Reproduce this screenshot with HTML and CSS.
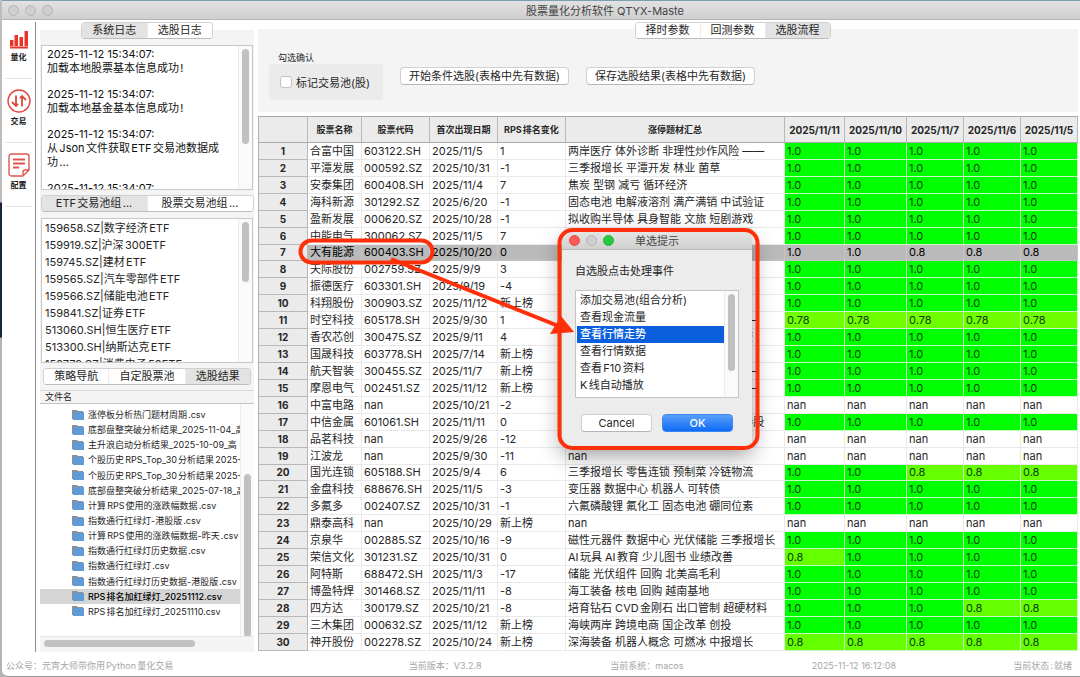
FILE: index.html
```html
<!DOCTYPE html>
<html lang="zh-CN">
<head>
    <meta charset="UTF-8">
    <meta name="viewport" content="width=device-width, initial-scale=1.0">
    <title>股票量化分析软件 QTYX-Maste</title>
    <link rel="stylesheet" href="styles.css">
</head>

<body>
    <div class="app">
        <header class="titlebar">
            <div class="lights"><i></i><i></i><i></i></div>
            <h1>股票量化分析软件 QTYX-Maste</h1>
        </header>

        <div class="main">
            <nav class="sidebar">
                <a href="#quant">
                    <svg width="20" height="18" viewBox="0 0 20 18" fill="#e8352b">
                        <rect x="1" y="9" width="3.500" height="6"/>
                        <rect x="5.500" y="4" width="3.500" height="11"/>
                        <rect x="10.500" y="6" width="3.500" height="9"/>
                        <rect x="15.500" y="0" width="3.500" height="15"/>
                        <rect x="1" y="15.500" width="18" height="2"/>
                    </svg>
                    量化
                </a>
                <a href="#trade">
                    <svg width="24" height="24" viewBox="0 0 24 24" fill="none" stroke="#e0483e" stroke-width="1.4">
                        <circle cx="12" cy="12" r="11"/>
                        <path d="M9 6.500V17M5 13L9 17L11 15M15 17.500V7M13 9L15 7L19 11" stroke-width="1.8"/>
                    </svg>
                    交易
                </a>
                <a href="#config">
                    <svg width="22" height="24" viewBox="0 0 22 24" fill="none" stroke="#e0564e" stroke-width="1.4">
                        <path d="M14 23H3.500Q1 23 1 20.500V3.500Q1 1 3.500 1H18.500Q21 1 21 3.500V17L15 23V19Q15 17 17 17H21"/>
                        <path d="M5 6.500H17M5 10.500H17M5 14.500H11" stroke-width="1.8"/>
                    </svg>
                    配置
                </a>
            </nav>

            <aside class="left">
                <div class="tabs tabs-log">
                    <button class="on">系统日志</button><button>选股日志</button>
                </div>
                <div class="box log">
                    <div class="text">
                        <p>2025-11-12 15:34:07:<br>加载本地股票基本信息成功!</p>
                        <p>2025-11-12 15:34:07:<br>加载本地基金基本信息成功!</p>
                        <p>2025-11-12 15:34:07:<br>从Json文件获取ETF交易池数据成功...</p>
                        <p>2025-11-12 15:34:07:</p>
                    </div>
                    <div class="track"><div class="thumb thumb-log"></div></div>
                </div>

                <div class="tabs tabs-pool">
                    <button class="on">ETF交易池组...</button><button>股票交易池组...</button>
                </div>
                <div class="box pool">
                    <ul>
                        <li>159658.SZ|数字经济ETF</li>
                        <li>159919.SZ|沪深300ETF</li>
                        <li>159745.SZ|建材ETF</li>
                        <li>159565.SZ|汽车零部件ETF</li>
                        <li>159566.SZ|储能电池ETF</li>
                        <li>159841.SZ|证券ETF</li>
                        <li>513060.SH|恒生医疗ETF</li>
                        <li>513300.SH|纳斯达克ETF</li>
                        <li>159779.SZ|消费电子50ETF</li>
                    </ul>
                    <div class="track"><div class="thumb thumb-pool"></div></div>
                </div>

                <div class="tabs tabs-nav">
                    <button>策略导航</button><button>自定股票池</button><button class="on">选股结果</button>
                </div>
                <div class="files-head">文件名</div>
                <div class="files">
                    <ul id="files"></ul>
                    <div class="track"><div class="thumb thumb-files"></div></div>
                </div>
                <div class="hscroll"><div></div></div>
            </aside>

            <section class="right">
                <div class="panel">
                    <div class="tabs tabs-flow">
                        <button>择时参数</button><button>回测参数</button><button class="on">选股流程</button>
                    </div>
                    <div class="tools">
                        <fieldset>
                            <legend>勾选确认</legend>
                            <div class="group">
                                <input type="checkbox" id="mark"><label for="mark">标记交易池(股)</label>
                            </div>
                        </fieldset>
                        <button class="push">开始条件选股(表格中先有数据)</button>
                        <button class="push">保存选股结果(表格中先有数据)</button>
                    </div>
                </div>
                <div class="sheet">
                    <table>
                        <colgroup>
                            <col class="c-no"><col class="c-name"><col class="c-code"><col class="c-date"><col class="c-rank"><col>
                            <col class="c-d1"><col class="c-d2"><col class="c-d3"><col class="c-d3"><col class="c-d3">
                        </colgroup>
                        <thead>
                            <tr>
                                <th></th><th>股票名称</th><th>股票代码</th><th>首次出现日期</th><th>RPS排名变化</th><th>涨停题材汇总</th>
                                <th class="num">2025/11/11</th><th class="num">2025/11/10</th><th class="num">2025/11/7</th><th class="num">2025/11/6</th><th class="num">2025/11/5</th>
                            </tr>
                        </thead>
                        <tbody id="rows"></tbody>
                    </table>
                </div>
            </section>
        </div>

        <footer class="status">
            <span>公众号：元宵大师带你用Python量化交易</span>
            <span>当前版本：V3.2.8</span>
            <span>当前系统：macos</span>
            <span>2025-11-12 16:12:08</span>
            <span>当前状态:就绪</span>
        </footer>
    </div>

    <div class="dialog" role="dialog" aria-labelledby="dialog-title">
        <div class="dialog-bar">
            <div class="lights"><i class="red"></i><i></i><i class="green"></i></div>
            <h2 id="dialog-title">单选提示</h2>
        </div>
        <div class="dialog-body">
            <p>自选股点击处理事件</p>
            <div class="choices">
                <ul role="listbox">
                    <li role="option">添加交易池(组合分析)</li>
                    <li role="option">查看现金流量</li>
                    <li role="option" aria-selected="true">查看行情走势</li>
                    <li role="option">查看行情数据</li>
                    <li role="option">查看F10资料</li>
                    <li role="option">K线自动播放</li>
                </ul>
                <div class="track"><div class="thumb thumb-choices"></div></div>
            </div>
            <div class="actions">
                <button>Cancel</button><button class="ok">OK</button>
            </div>
        </div>
    </div>

    <svg class="marks" width="1080" height="677" viewBox="0 0 1080 677" fill="none" stroke="#ff2f0a" stroke-width="4">
        <rect x="300.500" y="240.500" width="132" height="22" rx="11"/>
        <rect x="559.500" y="230" width="198" height="218" rx="13"/>
        <path d="M391 259L556 325"/>
        <path d="M574 332L561 316L550 334Z" fill="#ff2f0a" stroke="none"/>
    </svg>

    <script>
        const files = [
            '涨停板分析热门题材周期.csv',
            '底部盘整突破分析结果_2025-11-04_高',
            '主升浪启动分析结果_2025-10-09_高',
            '个股历史RPS_Top_30分析结果2025-11',
            '个股历史RPS_Top_30分析结果2025-10',
            '底部盘整突破分析结果_2025-07-18_高',
            '计算RPS使用的涨跌幅数据.csv',
            '指数通行红绿灯-港股版.csv',
            '计算RPS使用的涨跌幅数据-昨天.csv',
            '指数通行红绿灯历史数据.csv',
            '指数通行红绿灯.csv',
            '指数通行红绿灯历史数据-港股版.csv',
            'RPS排名加红绿灯_20251112.csv',
            'RPS排名加红绿灯_20251110.csv'
        ];
        const folder = '<svg width="12" height="10" viewBox="0 0 12 10"><path d="M0 0H5L6 1H11V9H0Z" fill="#8d8f94"/><path d="M1 2H12V10H1Z" fill="#5f9bd6"/></svg>';

        document.getElementById('files').innerHTML = files.map((name, i) =>
            `<li${i === 12 ? ' class="on"' : ''}>${folder}<span>${name}</span></li>`).join('');

        // 名称, 代码, 首次出现日期, 排名变化, 题材, 红绿灯
        const one = '1.0 1.0 1.0 1.0 1.0';
        const nan = 'nan nan nan nan nan';
        const rows = [
            ['合富中国', '603122.SH', '2025/11/5', '1', '两岸医疗 体外诊断 非理性炒作风险 ——', one],
            ['平潭发展', '000592.SZ', '2025/10/31', '-1', '三季报增长 平潭开发 林业 菌草', one],
            ['安泰集团', '600408.SH', '2025/11/4', '7', '焦炭 型钢 减亏 循环经济', one],
            ['海科新源', '301292.SZ', '2025/6/20', '-1', '固态电池 电解液溶剂 满产满销 中试验证', one],
            ['盈新发展', '000620.SZ', '2025/10/28', '-1', '拟收购半导体 具身智能 文旅 短剧游戏', one],
            ['中能电气', '300062.SZ', '2025/11/5', '7', '储能 充电桩 光伏', one],
            ['大有能源', '600403.SH', '2025/10/20', '0', '煤炭 河南国资', '1.0 1.0 0.8 0.8 0.8'],
            ['天际股份', '002759.SZ', '2025/9/9', '3', '六氟磷酸锂 固态电池', one],
            ['振德医疗', '603301.SH', '2025/9/19', '-4', '三季报增长 医疗器械 医疗耗材 新址', one],
            ['科翔股份', '300903.SZ', '2025/11/12', '新上榜', '印制电路板 固态电池', one],
            ['时空科技', '605178.SH', '2025/9/30', '1', '存储芯片 收购资产 夜间经济 股权 ——', '0.78 0.78 0.78 0.78 0.78'],
            ['香农芯创', '300475.SZ', '2025/9/11', '4', '存储芯片 三季报增长 海力士 国资投资', one],
            ['国晟科技', '603778.SH', '2025/7/14', '新上榜', '光伏 固态电池', one],
            ['航天智装', '300455.SZ', '2025/11/7', '新上榜', '商业航天 卫星导航 智能装备 央企 ——', one],
            ['摩恩电气', '002451.SZ', '2025/11/12', '新上榜', '电线电缆 核电风电 电网设备 上海 ——', one],
            ['中富电路', 'nan', '2025/10/21', '-2', 'nan', nan],
            ['中信金属', '601061.SH', '2025/11/11', '0', '三季报增长 有色金属 铌铜贸易 矿山参股', one],
            ['品茗科技', 'nan', '2025/9/26', '-12', 'nan', nan],
            ['江波龙', 'nan', '2025/9/30', '-11', 'nan', nan],
            ['国光连锁', '605188.SH', '2025/9/4', '6', '三季报增长 零售连锁 预制菜 冷链物流', '1.0 1.0 0.8 0.8 0.8'],
            ['金盘科技', '688676.SH', '2025/11/5', '-3', '变压器 数据中心 机器人 可转债', one],
            ['多氟多', '002407.SZ', '2025/10/31', '-1', '六氟磷酸锂 氟化工 固态电池 硼同位素', one],
            ['鼎泰高科', 'nan', '2025/10/29', '新上榜', 'nan', nan],
            ['京泉华', '002885.SZ', '2025/10/16', '-9', '磁性元器件 数据中心 光伏储能 三季报增长', one],
            ['荣信文化', '301231.SZ', '2025/10/31', '0', 'AI玩具 AI教育 少儿图书 业绩改善', '0.8 1.0 1.0 1.0 1.0'],
            ['阿特斯', '688472.SH', '2025/11/3', '-17', '储能 光伏组件 回购 北美高毛利', one],
            ['博盈特焊', '301468.SZ', '2025/11/11', '-8', '海工装备 核电 回购 越南基地', one],
            ['四方达', '300179.SZ', '2025/10/21', '-8', '培育钻石 CVD金刚石 出口管制 超硬材料', '1.0 1.0 1.0 0.8 0.8'],
            ['三木集团', '000632.SZ', '2025/11/12', '新上榜', '海峡两岸 跨境电商 国企改革 创投', one],
            ['神开股份', '002278.SZ', '2025/10/24', '新上榜', '深海装备 机器人概念 可燃冰 中报增长', '0.8 0.8 0.8 0.8 0.8']
        ];
        const light = { '1.0': 'g1', '0.8': 'g2', '0.78': 'g3' };

        document.getElementById('rows').innerHTML = rows.map((r, i) => {
            const text = r.slice(0, 5).map(v => `<td>${v}</td>`).join('');
            const vals = r[5].split(' ').map(v => `<td class="${light[v] || ''}">${v}</td>`).join('');
            return `<tr${i === 6 ? ' class="on"' : ''}><th class="num">${i + 1}</th>${text}${vals}</tr>`;
        }).join('');
    </script>
</body>
</html>
```

FILE: styles.css
```css
*{
    box-sizing: border-box;
    margin: 0;
    padding: 0;
}

body{
    font-family: Inter, "Noto Sans CJK SC", sans-serif;
    font-size: 11px;
    color: #262626;
    text-autospace: normal;
    background: linear-gradient(#bdbdbd 202px, #17243a 203px, #17243a 337px, #b4b4b4 338px);
}

ul{
    list-style: none;
}

button, input{
    font: inherit;
    color: inherit;
}

.app{
    height: 100vh;
    min-height: 600px;
    display: flex;
    flex-direction: column;
    margin-left: 2px;
    background-color: #fff;
    border-top: 1px solid #7d9fb4;
    border-bottom: 1px solid #999;
    border-radius: 0 0 0 6px;
    overflow: hidden;
}

/* title bar */
.titlebar{
    flex: none;
    height: 19px;
    position: relative;
    display: flex;
    align-items: center;
    justify-content: center;
    background: linear-gradient(#e2e2e2, #cfcfcf);
    border-bottom: 1px solid #b5b5b5;
}

.titlebar h1{
    font-size: 11px;
    font-weight: 400;
    color: #444;
    padding-left: 128px;
}

.lights{
    position: absolute;
    left: 6px;
    display: flex;
    gap: 6px;
}

.lights i{
    width: 11px;
    height: 11px;
    border-radius: 50%;
    background-color: #cfcfcf;
    border: 1px solid #b4b4b4;
}

.lights .red{
    background-color: #fc5b57;
    border-color: #e64b46;
}

.lights .green{
    background-color: #28c840;
    border-color: #24b236;
}

.main{
    flex: 1;
    min-height: 0;
    display: flex;
}

/* sidebar */
.sidebar{
    flex: none;
    width: 34px;
    margin: 2px 0;
    border-right: 1px solid #8c8c8c;
}

.sidebar a{
    height: 64px;
    display: flex;
    flex-direction: column;
    align-items: center;
    justify-content: flex-end;
    gap: 2px;
    margin: 0 3px;
    padding-bottom: 15px;
    border-bottom: 1px solid #e6e6e6;
    color: #1c1c1c;
    font-size: 8px;
    font-weight: 700;
    line-height: 12px;
    text-decoration: none;
}

.sidebar a:first-child{
    height: 57px;
}

/* tabs */
.tabs{
    display: flex;
    height: 17px;
    align-self: center;
    border: 1px solid #d0d0d0;
    border-bottom-color: #bdbdbd;
    border-radius: 4px;
    background-color: #fff;
    overflow: hidden;
}

.tabs button{
    flex: 1;
    border: none;
    background-color: #fff;
    line-height: 15px;
    white-space: nowrap;
}

.tabs button + button{
    border-left: 1px solid #ececec;
}

.tabs .on{
    background-color: #e3e3e3;
}

/* left column */
.left{
    flex: none;
    width: 214px;
    display: flex;
    flex-direction: column;
    margin: 2px 3px 2px 4px;
    background: linear-gradient(#fff 8px, #f4f4f4 8px);
}

.tabs-log{
    width: 132px;
}

.tabs-pool{
    width: 213px;
    margin-top: 5px;
}

.tabs-nav{
    width: 208px;
    margin-top: 5px;
}

.tabs-nav button{
    flex: auto;
}

.box{
    display: flex;
    margin: 6px 1px 0;
    border: 1px solid #c8c8c8;
    background-color: #fff;
    overflow: hidden;
}

.box > :first-child{
    flex: 1;
    min-width: 0;
}

.log{
    height: 145px;
}

.log .text{
    padding: 1px 14px 0 5px;
    line-height: 14px;
    color: #111;
}

.log p{
    margin-bottom: 12px;
}

.pool{
    height: 145px;
}

.pool ul{
    padding: 1px 0 0 3px;
    line-height: 17px;
}

.track{
    flex: none;
    width: 14px;
    background-color: #fafafa;
    border-left: 1px solid #ebebeb;
}

.thumb{
    width: 7px;
    margin-left: 3px;
    border-radius: 4px;
    background-color: #c1c1c1;
}

.thumb-log{
    height: 95px;
    margin-top: 3px;
}

.thumb-pool{
    height: 60px;
    margin-top: 3px;
}

.files-head{
    margin-top: 5px;
    padding-left: 5px;
    border-top: 1px solid #d9d9d9;
    border-bottom: 1px solid #c4c4c4;
    font-size: 9px;
    line-height: 12px;
}

.files{
    flex: 1;
    min-height: 0;
    display: flex;
    background-color: #fff;
}

.files ul{
    flex: 1;
    min-width: 0;
    display: grid;
    grid-auto-rows: 1fr;
    padding: 3px 0 17px;
    font-size: 9px;
}

.files li{
    display: flex;
    align-items: center;
    gap: 4px;
    padding-left: 32px;
    white-space: nowrap;
    overflow: hidden;
}

.files li svg{
    flex: none;
}

.files .on{
    background-color: #d5d5d5;
    font-weight: 500;
    color: #000;
}

.thumb-files{
    height: 163px;
    margin-top: 70px;
}

.hscroll{
    flex: none;
    padding: 3px 4px 5px;
    border-top: 1px solid #e6e6e6;
}

.hscroll div{
    width: 151px;
    height: 7px;
    border-radius: 4px;
    background-color: #c1c1c1;
}

/* right column */
.right{
    flex: 1;
    min-width: 0;
    display: flex;
    flex-direction: column;
    padding: 2px 2px 3px 1px;
}

.panel{
    flex: none;
    height: 90px;
    display: flex;
    flex-direction: column;
    background: linear-gradient(#fff 7px, #f4f4f4 7px);
}

.tabs-flow{
    width: 196px;
    margin-left: 129px;
}

.tools{
    display: flex;
    align-items: flex-start;
    gap: 17px;
    padding: 12px 11px 0;
}

fieldset{
    border: none;
}

legend{
    padding-left: 9px;
    font-size: 9px;
    line-height: 13px;
}

.group{
    width: 114px;
    height: 36px;
    display: flex;
    align-items: center;
    gap: 4px;
    padding-left: 11px;
    background-color: #ebebeb;
    border-radius: 2px;
}

.group input{
    appearance: none;
    width: 12px;
    height: 12px;
    background-color: #fff;
    border: 1px solid #c2c2c2;
    border-radius: 3px;
}

.push{
    width: 169px;
    height: 18px;
    margin-top: 16px;
    background-color: #fff;
    border: 1px solid #d0d0d0;
    border-bottom-color: #b8b8b8;
    border-radius: 4px;
    line-height: 15px;
    white-space: nowrap;
}

.sheet{
    flex: 1;
    min-height: 0;
    margin-top: 4px;
}

table{
    width: 100%;
    height: 100%;
    table-layout: fixed;
    border-collapse: separate;
    border-spacing: 0;
    border-left: 1px solid #b0b0b0;
}

.c-no{ width: 49px; }
.c-name{ width: 54px; }
.c-code, .c-date{ width: 68px; }
.c-rank{ width: 68px; }
.c-d1{ width: 60px; }
.c-d2{ width: 62px; }
.c-d3{ width: 57px; }

th{
    background-color: #ebebeb;
    border-right: 1px solid #b8b8b8;
    border-bottom: 1px solid #b8b8b8;
    font-size: 9px;
    font-weight: 700;
    line-height: 14px;
    white-space: nowrap;
}

th.num{
    font-size: 10px;
}

thead th{
    height: 27px;
    border-top: 1px solid #a8a8a8;
    border-bottom-color: #a8a8a8;
}

td{
    padding-left: 2px;
    border-right: 1px solid #e9e9e9;
    border-bottom: 1px solid #e9e9e9;
    line-height: 14px;
    white-space: nowrap;
    overflow: hidden;
}

td.g1{ background-color: #00ff00; }
td.g2{ background-color: #66ff00; }
td.g3{ background-color: #70ff00; }

td.g1, td.g2, td.g3{
    color: #0c3c08;
    border-color: #c9f7c4;
}

tr.on td{
    background-color: #bababa;
    border-color: #c4c4c4;
    color: #000;
}

.status{
    flex: none;
    display: grid;
    grid-template-columns: 2fr 1fr 1fr 1fr auto;
    padding: 5px 8px 3px 4px;
    font-size: 9px;
    line-height: 14px;
    color: #a6a6a6;
}

/* choice dialog */
.dialog{
    position: absolute;
    left: 562px;
    top: 231px;
    width: 190px;
    height: 216px;
    background-color: #ececec;
    border-radius: 6px;
    box-shadow: 0 8px 22px rgba(0, 0, 0, .4);
    overflow: hidden;
}

.dialog-bar{
    height: 19px;
    display: flex;
    align-items: center;
    justify-content: center;
    background: linear-gradient(#e6e6e6, #d0d0d0);
    border-bottom: 1px solid #b9b9b9;
}

.dialog-bar .lights{
    left: 7px;
}

.dialog-bar h2{
    font-size: 11px;
    font-weight: 400;
    color: #444;
}

.dialog-body{
    padding: 13px 13px 0;
}

.dialog-body p{
    line-height: 16px;
}

.choices{
    display: flex;
    height: 108px;
    margin-top: 11px;
    background-color: #fff;
    border: 1px solid #c3c3c3;
}

.choices ul{
    flex: 1;
    padding: 1px 0 0 1px;
    line-height: 17px;
}

.choices li{
    padding-left: 3px;
}

.choices li[aria-selected]{
    background-color: #0a60dc;
    color: #fff;
    font-weight: 500;
}

.thumb-choices{
    height: 77px;
    margin-top: 3px;
}

.actions{
    display: flex;
    gap: 10px;
    padding: 16px 6px 0;
}

.actions button{
    flex: 1;
    height: 18px;
    background-color: #fff;
    border: 1px solid #cfcfcf;
    border-bottom-color: #b5b5b5;
    border-radius: 4px;
    line-height: 15px;
}

.actions .ok{
    background: linear-gradient(#5a9ffb, #0f6bf6);
    border-color: #3c86f3;
    color: #fff;
    font-weight: 500;
}

/* red guide marks above the window */
.marks{
    position: absolute;
    left: 0;
    top: 0;
    pointer-events: none;
}
```
